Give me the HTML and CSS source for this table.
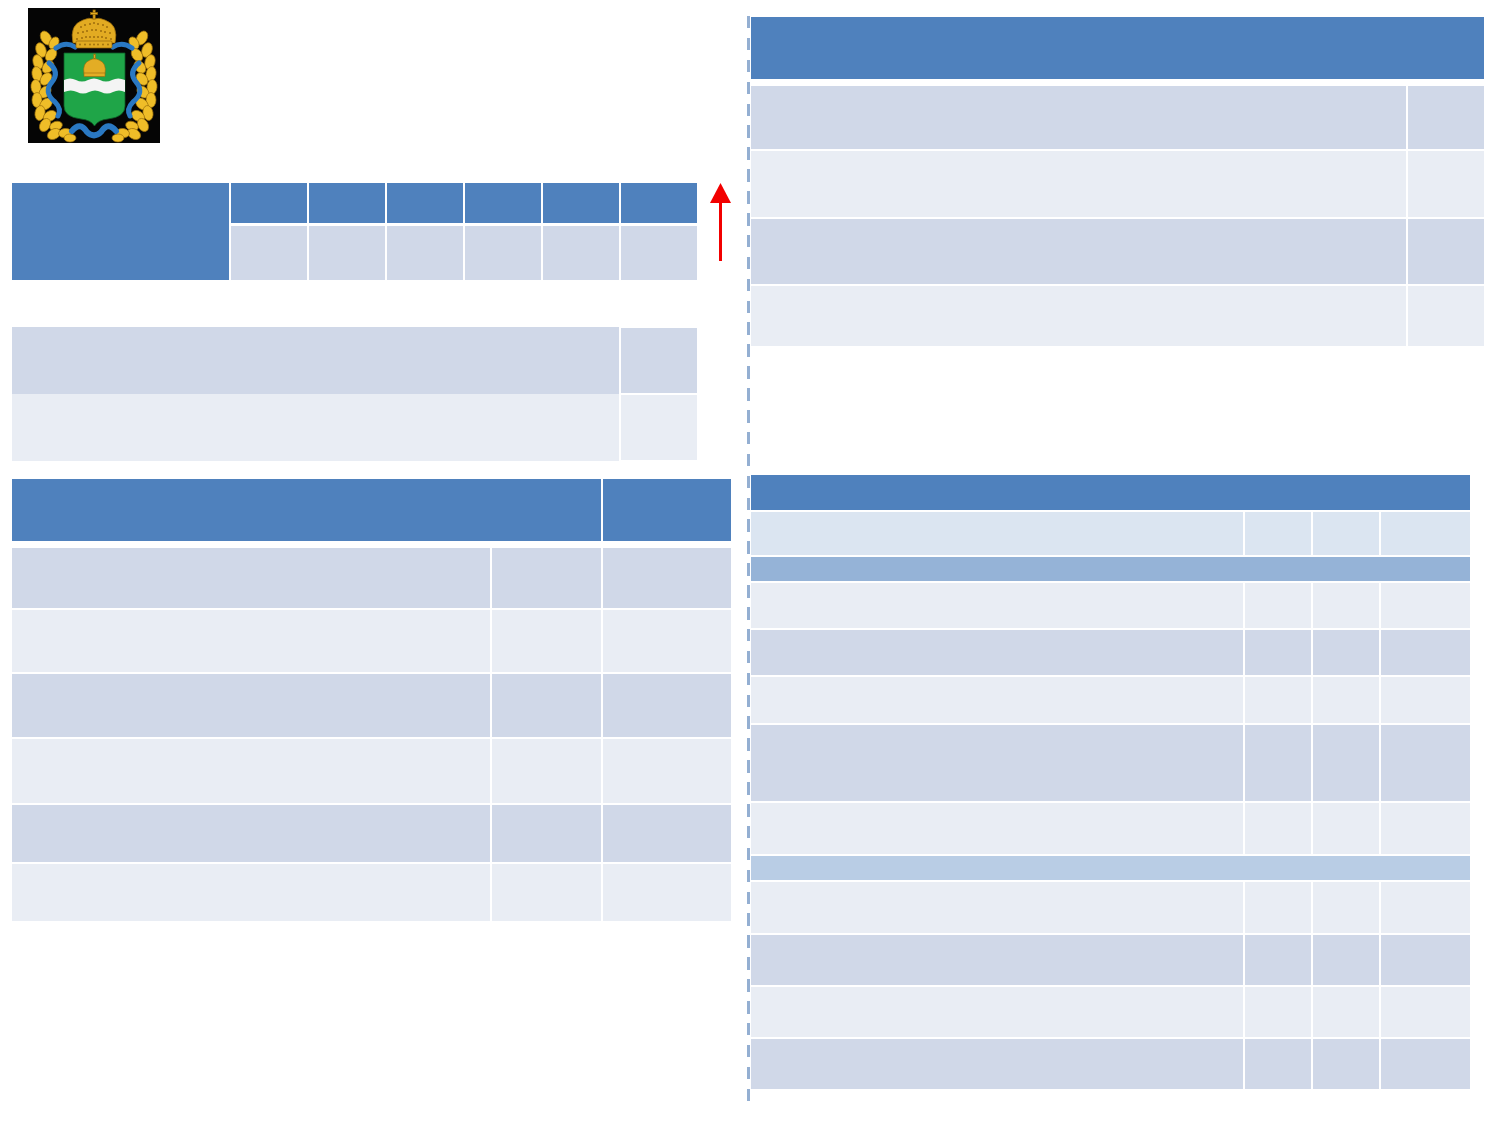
FILE: index.html
```html
<!DOCTYPE html>
<html lang="ru">
<head>
<meta charset="utf-8">
<title>Slide</title>
<link rel="stylesheet" href="styles.css">
</head>
<body>
<div class="page">
  <div class="left">
    <div class="arms">
      <svg viewBox="0 0 132 135" width="132" height="135">
        <rect width="132" height="135" fill="#050505"/>
        <g id="branch">
          <g fill="#efbd28" stroke="#9c700c" stroke-width="0.7">
            <ellipse cx="18" cy="30" rx="5" ry="7.5" transform="rotate(-30 18 30)"/>
            <ellipse cx="26" cy="35" rx="4.5" ry="6.5" transform="rotate(30 26 35)"/>
            <ellipse cx="13" cy="42" rx="5" ry="7.5" transform="rotate(-20 13 42)"/>
            <ellipse cx="23" cy="47" rx="5" ry="7" transform="rotate(35 23 47)"/>
            <ellipse cx="10" cy="54" rx="5" ry="7.5" transform="rotate(-15 10 54)"/>
            <ellipse cx="20" cy="59" rx="5" ry="7" transform="rotate(40 20 59)"/>
            <ellipse cx="9" cy="66" rx="5" ry="7.5" transform="rotate(-10 9 66)"/>
            <ellipse cx="18" cy="71" rx="5" ry="7" transform="rotate(40 18 71)"/>
            <ellipse cx="8" cy="79" rx="5" ry="7.5" transform="rotate(-5 8 79)"/>
            <ellipse cx="17" cy="84" rx="5" ry="7" transform="rotate(45 17 84)"/>
            <ellipse cx="9" cy="92" rx="5" ry="7.5"/>
            <ellipse cx="18" cy="96" rx="5" ry="7" transform="rotate(50 18 96)"/>
            <ellipse cx="12" cy="105" rx="5" ry="7.5" transform="rotate(10 12 105)"/>
            <ellipse cx="22" cy="108" rx="5" ry="7" transform="rotate(60 22 108)"/>
            <ellipse cx="17" cy="117" rx="5" ry="7" transform="rotate(30 17 117)"/>
            <ellipse cx="28" cy="118" rx="4.5" ry="6.5" transform="rotate(70 28 118)"/>
            <ellipse cx="26" cy="126" rx="5" ry="7" transform="rotate(60 26 126)"/>
            <ellipse cx="37" cy="125" rx="4.5" ry="6.5" transform="rotate(80 37 125)"/>
            <ellipse cx="42" cy="130" rx="4" ry="6" transform="rotate(90 42 130)"/>
          </g>
          <g fill="none" stroke="#2a78c2" stroke-width="5" stroke-linecap="round">
            <path d="M28 40 Q38 33 47 39"/>
            <path d="M21 55 Q32 64 24 74 Q15 84 27 94 Q34 101 30 108"/>
          </g>
        </g>
        <use href="#branch" transform="translate(132 0) scale(-1 1)"/>
        <path d="M44 123 Q52 113 59 124 Q66 131 73 124 Q80 113 88 123" fill="none" stroke="#2a78c2" stroke-width="6" stroke-linecap="round"/>
        <path d="M36 45 H97 V98 Q97 109 80 111 Q70 112 66.5 118 Q63 112 53 111 Q36 109 36 98 Z" fill="#1fa548" stroke="#0d5a26" stroke-width="0.8"/>
        <path d="M36 72 Q42 69 48 72 T60 72 T72 72 T84 72 T97 72 V84 Q91 81 85 84 T73 84 T61 84 T49 84 T36 84 Z" fill="#f4f4f4"/>
        <g fill="#e3ad25" stroke="#9a6c0c" stroke-width="0.6">
          <path d="M56 66 Q54 55 62 52 Q66.5 49 71 52 Q79 55 77 66 Z"/>
          <rect x="56" y="65" width="21" height="3.5"/>
          <rect x="65.8" y="46" width="1.5" height="5"/>
        </g>
        <g fill="#e2ab22" stroke="#936508" stroke-width="0.7">
          <path d="M45 35 Q41 17 55 12 Q61 9 66 11 Q71 9 77 12 Q91 17 87 35 Z"/>
          <rect x="48" y="33" width="36" height="7" rx="1"/>
          <rect x="65" y="2" width="2.2" height="9"/>
          <rect x="62.6" y="4.5" width="7" height="2"/>
        </g>
        <g fill="#9c6d0c">
          <circle cx="53" cy="19" r="1"/><circle cx="57" cy="17" r="1"/><circle cx="62" cy="16" r="1"/><circle cx="66" cy="15" r="1"/><circle cx="70" cy="16" r="1"/><circle cx="75" cy="17" r="1"/><circle cx="79" cy="19" r="1"/>
          <circle cx="50" cy="25" r="1"/><circle cx="55" cy="24" r="1"/><circle cx="59" cy="23" r="1"/><circle cx="64" cy="22" r="1"/><circle cx="68" cy="22" r="1"/><circle cx="73" cy="23" r="1"/><circle cx="77" cy="24" r="1"/><circle cx="82" cy="25" r="1"/>
          <circle cx="49" cy="31" r="1"/><circle cx="54" cy="30" r="1"/><circle cx="58" cy="29" r="1"/><circle cx="62" cy="29" r="1"/><circle cx="66" cy="29" r="1"/><circle cx="70" cy="29" r="1"/><circle cx="74" cy="29" r="1"/><circle cx="78" cy="30" r="1"/><circle cx="83" cy="31" r="1"/>
          <circle cx="52" cy="36.5" r="0.9"/><circle cx="57" cy="36.5" r="0.9"/><circle cx="62" cy="36.5" r="0.9"/><circle cx="66" cy="36.5" r="0.9"/><circle cx="70" cy="36.5" r="0.9"/><circle cx="75" cy="36.5" r="0.9"/><circle cx="80" cy="36.5" r="0.9"/>
        </g>
      </svg>
    </div>

    <div class="row1">
      <div class="t1">
        <div class="hdr tall"></div>
        <div class="hdr"></div><div class="hdr"></div><div class="hdr"></div><div class="hdr"></div><div class="hdr"></div><div class="hdr"></div>
        <div class="dark"></div><div class="dark"></div><div class="dark"></div><div class="dark"></div><div class="dark"></div><div class="dark"></div>
      </div>
      <svg class="arrow" viewBox="0 0 21 78" width="21" height="78">
        <polygon points="10.5,0 21,20 0,20" fill="#f20000"/>
        <rect x="9" y="19" width="3" height="59" fill="#f20000"/>
      </svg>
    </div>

    <div class="t2">
      <div class="dark"></div><div class="dark side"></div>
      <div class="light"></div><div class="light side"></div>
    </div>

    <div class="t3">
      <div class="t3-head">
        <div class="hdr"></div><div class="hdr"></div>
      </div>
      <div class="t3-body">
        <div class="dark"></div><div class="dark"></div><div class="dark"></div>
        <div class="light"></div><div class="light"></div><div class="light"></div>
        <div class="dark"></div><div class="dark"></div><div class="dark"></div>
        <div class="light"></div><div class="light"></div><div class="light"></div>
        <div class="dark"></div><div class="dark"></div><div class="dark"></div>
        <div class="light"></div><div class="light"></div><div class="light"></div>
      </div>
    </div>
  </div>

  <div class="divider"></div>

  <div class="right">
    <div class="t4">
      <div class="t4-head hdr"></div>
      <div class="t4-body">
        <div class="dark"></div><div class="dark"></div>
        <div class="light"></div><div class="light"></div>
        <div class="dark"></div><div class="dark"></div>
        <div class="light"></div><div class="light"></div>
      </div>
    </div>

    <div class="t5">
      <div class="t5-head hdr"></div>
      <div class="t5-body">
        <div class="sub"></div><div class="sub"></div><div class="sub"></div><div class="sub"></div>
        <div class="band1 span-all"></div>
        <div class="light"></div><div class="light"></div><div class="light"></div><div class="light"></div>
        <div class="dark"></div><div class="dark"></div><div class="dark"></div><div class="dark"></div>
        <div class="light"></div><div class="light"></div><div class="light"></div><div class="light"></div>
        <div class="dark"></div><div class="dark"></div><div class="dark"></div><div class="dark"></div>
        <div class="light"></div><div class="light"></div><div class="light"></div><div class="light"></div>
        <div class="band2 span-all"></div>
        <div class="light"></div><div class="light"></div><div class="light"></div><div class="light"></div>
        <div class="dark"></div><div class="dark"></div><div class="dark"></div><div class="dark"></div>
        <div class="light"></div><div class="light"></div><div class="light"></div><div class="light"></div>
        <div class="dark"></div><div class="dark"></div><div class="dark"></div><div class="dark"></div>
      </div>
    </div>
  </div>
</div>
</body>
</html>
```

FILE: styles.css
```css
* { box-sizing: border-box; }

body {
  margin: 0;
  background: #ffffff;
  font-family: "Liberation Sans", Arial, sans-serif;
}

.page {
  display: flex;
  align-items: flex-start;
  width: 1500px;
  height: 1125px;
  overflow: hidden;
}

.hdr { background: #4f81bd; }
.dark { background: #d0d8e8; }
.light { background: #e9edf4; }
.sub { background: #dbe5f1; }
.band1 { background: #95b3d7; }
.band2 { background: #b9cde5; }
.span-all { grid-column: 1 / -1; }

/* left column */
.left {
  flex: none;
  width: 731px;
  padding-left: 12px;
}

.arms {
  width: 132px;
  height: 135px;
  margin: 8px 0 0 16px;
}

.arms svg { display: block; }

.row1 {
  display: flex;
  align-items: flex-start;
  margin-top: 40px;
}

.t1 {
  display: grid;
  grid-template-columns: 217px repeat(6, 76px);
  grid-template-rows: 40px 54px;
  gap: 3px 2px;
}

.t1 .tall { grid-row: span 2; }

.arrow {
  display: block;
  margin-left: 13px;
}

.t2 {
  margin-top: 47px;
  display: grid;
  grid-template-columns: 607px 76px;
  grid-template-rows: 67px 67px;
  column-gap: 2px;
}

.t2 .side {
  border-top: 1px solid #ffffff;
  border-bottom: 1px solid #ffffff;
}

.t3 {
  margin-top: 18px;
  width: 719px;
}

.t3-head {
  display: grid;
  grid-template-columns: 589px 128px;
  column-gap: 2px;
  height: 62px;
  margin-bottom: 7px;
}

.t3-body {
  display: grid;
  grid-template-columns: 478px 109px 128px;
  grid-template-rows: 60px 62px 63px 64px 57px 57px;
  gap: 2px;
}

/* divider */
.divider {
  flex: none;
  width: 3px;
  height: 1085px;
  margin: 16px 0 0 16px;
  background: repeating-linear-gradient(to bottom, #94afd2 0, #94afd2 12.5px, transparent 12.5px, transparent 21.89px);
}

/* right column */
.right {
  flex: none;
  width: 733px;
  margin-left: 1px;
  padding-top: 17px;
}

.t4-head {
  height: 62px;
  margin-bottom: 7px;
}

.t4-body {
  display: grid;
  grid-template-columns: 655px 76px;
  grid-template-rows: 63px 66px 65px 60px;
  gap: 2px;
}

.t5 {
  margin-top: 129px;
  width: 719px;
}

.t5-head {
  height: 35px;
  margin-bottom: 2px;
}

.t5-body {
  display: grid;
  grid-template-columns: 492px 66px 66px 89px;
  grid-template-rows: 43px 24px 45px 45px 46px 76px 51px 24px 51px 50px 50px 50px;
  gap: 2px;
}
```
